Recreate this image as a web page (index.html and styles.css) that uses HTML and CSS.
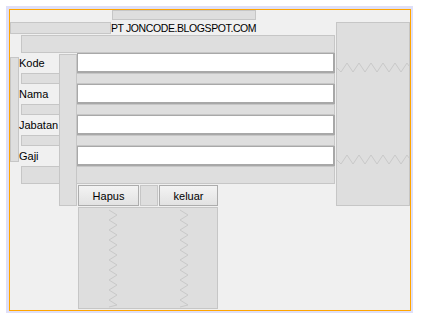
FILE: index.html
```html
<!DOCTYPE html>
<html>
<head>
    <meta charset="UTF-8">
    <title>PT JONCODE.BLOGSPOT.COM</title>
    <link rel="stylesheet" href="styles.css">
</head>
<body>
    <div class="stage">
        <div class="frame">
            <!-- layout gaps, painted first -->
            <div class="box top-strip"></div>
            <div class="box head-pad"></div>
            <div class="title">PT JONCODE.BLOGSPOT.COM</div>

            <div class="box gap gap-0"></div>
            <div class="box gap gap-1"></div>
            <div class="box gap gap-2"></div>
            <div class="box gap gap-3"></div>
            <div class="box gap gap-4"></div>

            <div class="box bar-left"></div>
            <div class="box bar-mid"></div>

            <div class="box side">
                <svg width="72" height="182" viewBox="0 0 72 182">
                    <polyline class="spring" points="0,45 4,49 10,40 16,49 22,40 28,49 34,40 40,49 46,40 52,49 58,40 64,49 70,40 72,43"/>
                    <polyline class="spring" points="0,137 4,141 10,132 16,141 22,132 28,141 34,132 40,141 46,132 52,141 58,132 64,141 70,132 72,135"/>
                </svg>
            </div>

            <!-- form rows -->
            <div class="lbl row-kode">Kode</div>
            <input class="field row-kode" type="text">

            <div class="lbl row-nama">Nama</div>
            <input class="field row-nama" type="text">

            <div class="lbl row-jab">Jabatan</div>
            <input class="field row-jab" type="text">

            <div class="lbl row-gaji">Gaji</div>
            <input class="field row-gaji" type="text">

            <button class="btn hapus">Hapus</button>
            <div class="box btn-gap"></div>
            <button class="btn keluar">keluar</button>

            <div class="box bottom">
                <svg width="138" height="101" viewBox="0 0 138 101">
                    <polyline class="spring" points="30,2 38,7 30,12 38,17 30,22 38,27 30,32 38,37 30,42 38,47 30,52 38,57 30,62 38,67 30,72 38,77 30,82 38,87 30,92 38,97 30,99"/>
                    <polyline class="spring" points="101,2 109,7 101,12 109,17 101,22 109,27 101,32 109,37 101,42 109,47 101,52 109,57 101,62 109,67 101,72 109,77 101,82 109,87 101,92 109,97 101,99"/>
                </svg>
            </div>
        </div>
    </div>
</body>
</html>
```

FILE: styles.css
```css
body {
    margin: 0;
    background-color: #fff;
    font-family: "Liberation Sans", Arial, sans-serif;
    font-size: 11px;
    color: #000;
}

.stage {
    width: fit-content;
    margin: 6px;
    padding: 3px 2px 2px 3px;
    background-color: #dfdff7;
}

/* line names avoid the -start / -end suffixes on purpose */
.frame {
    display: grid;
    width: 400px;
    height: 300px;
    border: 1px solid #ffa500;
    background-color: #f0f0f0;
    grid-template-columns:
        [left] 9px [label] 2px [gap] 38px [bar] 18px [field] 1px [btn] 33px
        [title] 1px [top] 27px [hapus-r] 1px [mid] 18px [mid-r] 1px
        [keluar] 59px [keluar-r] 38px [top-r] 79px [field-r] 1px
        [side] 74px [side-r];
    grid-template-rows:
        [r-top] 10px [r-top-x] 2px [r-head] 12px [r-head-x] 1px
        [r-gap0] 18px [r-kode] 20px [r-gap1] 11px [r-nama] 20px
        [r-gap2] 11px [r-jab] 20px [r-gap3] 11px [r-gaji] 20px
        [r-gap4] 18px [r-gap4-x] 1px [r-btn] 21px [r-btn-x] 1px
        [r-bottom] 103px [r-last];
}

.box {
    box-sizing: border-box;
    background-color: #dedede;
    border: 1px solid #c6c6c6;
}

.top-strip {
    grid-column: top / top-r;
    grid-row: r-top / r-top-x;
}

.head-pad {
    grid-column: left / title;
    grid-row: r-head / r-head-x;
}

.title {
    grid-column: title / top-r;
    grid-row: r-head / r-head-x;
    display: flex;
    align-items: center;
    font-size: 10.5px;
    letter-spacing: -0.4px;
    white-space: nowrap;
    line-height: 1;
}

.gap {
    grid-column: gap / field-r;
}

.gap-0 { grid-row: r-gap0 / r-kode; }
.gap-1 { grid-row: r-gap1 / r-nama; }
.gap-2 { grid-row: r-gap2 / r-jab; }
.gap-3 { grid-row: r-gap3 / r-gaji; }
.gap-4 { grid-row: r-gap4 / r-gap4-x; }

.bar-left {
    grid-column: left / label;
    grid-row: r-kode / r-gap4;
    margin: 4px 0;
}

.bar-mid {
    grid-column: bar / field;
    grid-row: r-kode / r-btn-x;
    margin-top: 1px;
}

.side {
    grid-column: side / side-r;
    grid-row: r-head / r-btn-x;
}

.side svg,
.bottom svg {
    display: block;
}

.spring {
    fill: none;
    stroke: #c9c9c9;
    stroke-width: 1;
}

.lbl {
    grid-column: label / bar;
    display: flex;
    align-items: center;
    white-space: nowrap;
    line-height: 1;
}

.field {
    grid-column: field / field-r;
    box-sizing: border-box;
    width: 100%;
    height: 100%;
    margin: 0;
    padding: 0 3px;
    background-color: #fff;
    border: 1px solid #a8a8a8;
    border-right-width: 2px;
    border-bottom-width: 2px;
    outline: none;
}

.row-kode { grid-row: r-kode / r-gap1; }
.row-nama { grid-row: r-nama / r-gap2; }
.row-jab { grid-row: r-jab / r-gap3; }
.row-gaji { grid-row: r-gaji / r-gap4; }

.btn {
    grid-row: r-btn / r-btn-x;
    box-sizing: border-box;
    width: 100%;
    height: 100%;
    margin: 0;
    padding: 0;
    font: inherit;
    color: #000;
    background: linear-gradient(#f3f3f3, #e2e2e2);
    border: 1px solid #acacac;
    border-radius: 0;
}

.hapus { grid-column: btn / hapus-r; }

.btn-gap {
    grid-column: mid / mid-r;
    grid-row: r-btn / r-btn-x;
}

.keluar { grid-column: keluar / keluar-r; }

.bottom {
    grid-column: btn / keluar-r;
    grid-row: r-bottom / r-last;
    margin-bottom: 1px;
}
```
